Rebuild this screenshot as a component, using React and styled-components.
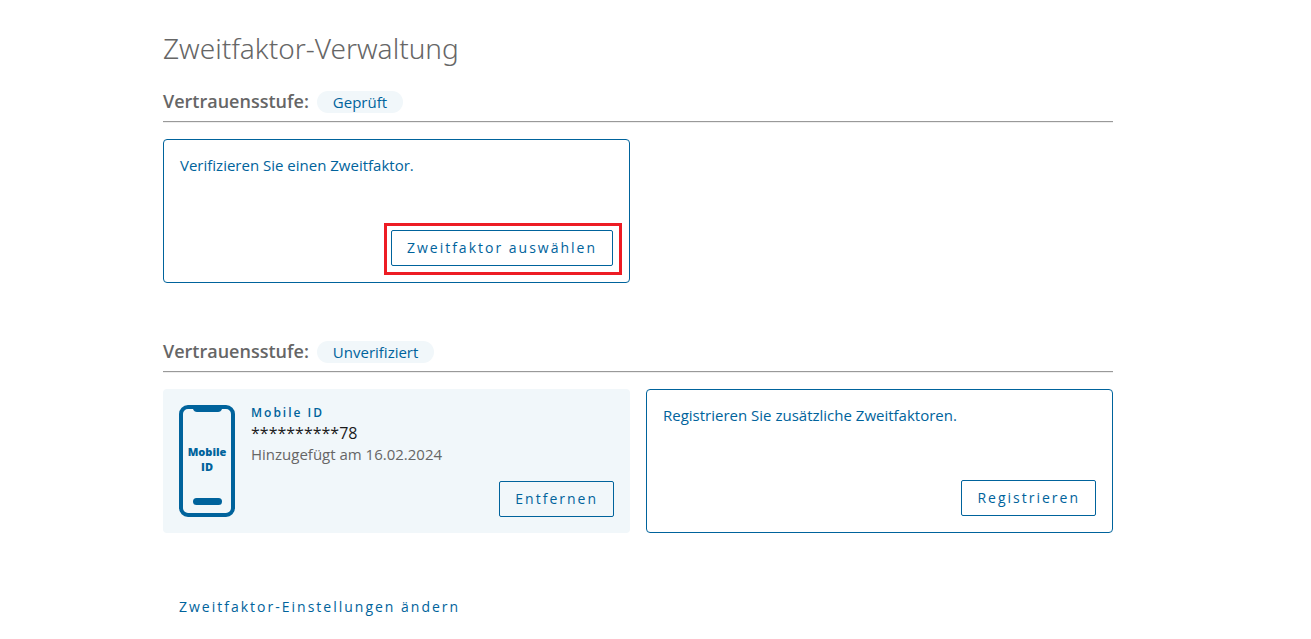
import React from "react";
import styled, { createGlobalStyle, css } from "styled-components";

const blue = "#00639c";
const pale = "#f1f7fa";
const grey = "#666666";

const GlobalStyle = createGlobalStyle`
  *, *::before, *::after { box-sizing: border-box; }
  body {
    margin: 0;
    background: #ffffff;
    color: ${grey};
    font-family: "Open Sans", "Noto Sans", sans-serif;
    font-size: 15px;
    line-height: 18px;
  }
`;

const Page = styled.main`
  padding: 30px 198px 16px 163px;
`;

const Title = styled.h1`
  margin: 0;
  font-family: "Noto Sans", "Open Sans", sans-serif;
  font-size: 28px;
  line-height: 36px;
  font-weight: 300;
`;

const Section = styled.section`
  margin-top: ${(p) => (p.$first ? 21 : 54)}px;
`;

const SectionHeader = styled.header`
  display: flex;
  align-items: center;
  gap: 8px;
  height: 35px;
  padding-bottom: 5px;
  border-bottom: 1px solid #999999;
  box-shadow: 0 1px 0 #eeeeee;
`;

const SectionTitle = styled.h2`
  margin: 0;
  padding-bottom: 2px;
  font-size: 18px;
  line-height: 24px;
  font-weight: 600;
`;

const Badge = styled.span`
  padding: 0 16px;
  border-radius: 11px;
  background: ${pale};
  color: ${blue};
  line-height: 22px;
`;

const CardGrid = styled.div`
  display: grid;
  grid-template-columns: 1fr 1fr;
  gap: 16px;
  margin-top: 17px;
`;

const Card = styled.article`
  display: flex;
  flex-direction: column;
  justify-content: space-between;
  min-height: 144px;
  padding: 16px;
  border-radius: 4px;
  color: ${blue};
  ${(p) =>
    p.$filled
      ? css`
          background: ${pale};
        `
      : css`
          border: 1px solid ${blue};
        `}
`;

const CardText = styled.p`
  margin: 0;
`;

const Button = styled.button`
  height: 36px;
  padding: 0 15px;
  border: 1px solid ${blue};
  border-radius: 2px;
  background: transparent;
  color: ${blue};
  font: inherit;
  font-size: 14px;
  letter-spacing: 2px;
  cursor: pointer;
`;

const Actions = styled.div`
  position: relative;
  align-self: flex-end;
`;

const Highlight = styled.span`
  position: absolute;
  inset: -7px -9px -9px -7px;
  border: 3px solid #ed1c24;
  pointer-events: none;
`;

const FactorCard = styled(Card)`
  flex-direction: row;
  justify-content: flex-start;
  gap: 16px;
`;

const FactorBody = styled.div`
  display: flex;
  flex: 1;
  flex-direction: column;
`;

const FactorName = styled.h3`
  margin: 0;
  font-size: 12px;
  line-height: 16px;
  font-weight: 600;
  letter-spacing: 2px;
`;

const FactorNumber = styled.p`
  margin: 0;
  color: #1a1a1a;
  font-size: 16px;
  line-height: 24px;
`;

const FactorDate = styled.p`
  margin: 0 0 auto;
  color: ${grey};
`;

const PhoneIcon = styled.svg`
  flex: none;
  width: 56px;
  height: 112px;
`;

const SettingsLink = styled.a`
  display: inline-block;
  margin: 65px 0 0 16px;
  color: ${blue};
  font-size: 14px;
  letter-spacing: 2px;
  text-decoration: none;
`;

function LevelSection({ level, first, children }) {
  return (
    <Section $first={first}>
      <SectionHeader>
        <SectionTitle>Vertrauensstufe:</SectionTitle>
        <Badge>{level}</Badge>
      </SectionHeader>
      <CardGrid>{children}</CardGrid>
    </Section>
  );
}

function Phone() {
  return (
    <PhoneIcon viewBox="0 0 56 112" role="img" aria-label="Mobile ID">
      <rect x="2" y="2" width="52" height="108" rx="7" fill="none" stroke={blue} strokeWidth="4" />
      <path d="M14 3H43V4Q42 7 39 7H18Q15 7 14 4Z" fill={blue} />
      <rect x="14" y="93" width="29" height="7" rx="3.5" fill={blue} />
      <g fill={blue} fontFamily="Open Sans, sans-serif" fontSize="11" fontWeight="800" textAnchor="middle">
        <text x="28" y="51">Mobile</text>
        <text x="28" y="66">ID</text>
      </g>
    </PhoneIcon>
  );
}

export default function App() {
  return (
    <>
      <GlobalStyle />
      <Page>
        <Title>Zweitfaktor-Verwaltung</Title>
        <LevelSection level="Geprüft" first>
          <Card>
            <CardText>Verifizieren Sie einen Zweitfaktor.</CardText>
            <Actions>
              <Button type="button">Zweitfaktor auswählen</Button>
              <Highlight />
            </Actions>
          </Card>
        </LevelSection>
        <LevelSection level="Unverifiziert">
          <FactorCard $filled>
            <Phone />
            <FactorBody>
              <FactorName>Mobile ID</FactorName>
              <FactorNumber>**********78</FactorNumber>
              <FactorDate>Hinzugefügt am 16.02.2024</FactorDate>
              <Actions>
                <Button type="button">Entfernen</Button>
              </Actions>
            </FactorBody>
          </FactorCard>
          <Card>
            <CardText>Registrieren Sie zusätzliche Zweitfaktoren.</CardText>
            <Actions>
              <Button type="button">Registrieren</Button>
            </Actions>
          </Card>
        </LevelSection>
        <SettingsLink href="#einstellungen">Zweitfaktor-Einstellungen ändern</SettingsLink>
      </Page>
    </>
  );
}
